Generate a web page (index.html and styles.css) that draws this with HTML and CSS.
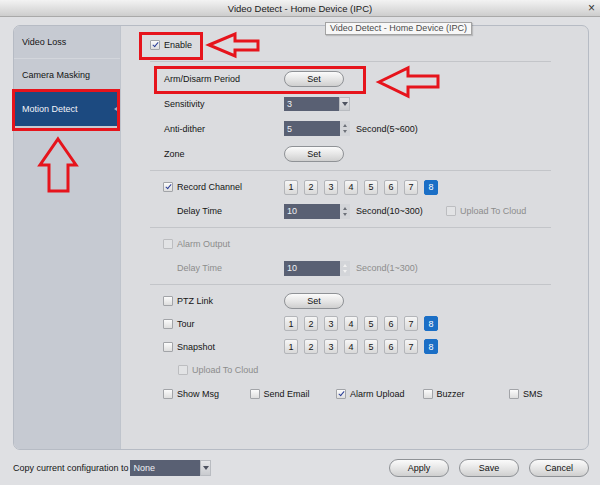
FILE: index.html
```html
<!DOCTYPE html>
<html lang="en">
<head>
    <meta charset="UTF-8">
    <meta name="viewport" content="width=device-width, initial-scale=1.0">
    <title>Video Detect - Home Device (IPC)</title>
    <link rel="stylesheet" href="styles.css">
</head>
<body>
    <div class="titlebar">
        <span class="title">Video Detect - Home Device (IPC)</span>
        <span class="close">×</span>
    </div>
    <div class="tooltip">Video Detect - Home Device (IPC)</div>

    <div class="panel">
        <ul class="sidebar">
            <li>Video Loss</li>
            <li>Camera Masking</li>
            <li class="active">Motion Detect</li>
        </ul>

        <div class="content">
            <div class="row enable"><span class="cb checked"></span>Enable</div>
            <div class="sep"></div>

            <div class="sec">
                <div class="row r25">
                    <span class="label">Arm/Disarm Period</span>
                    <span class="btn set">Set</span>
                </div>
                <div class="row r25">
                    <span class="label">Sensitivity</span>
                    <span class="select"><span class="val">3</span><span class="arrow"></span></span>
                </div>
                <div class="row r25">
                    <span class="label">Anti-dither</span>
                    <span class="spin"><span class="val">5</span><span class="updown"></span></span>
                    <span class="unit">Second(5~600)</span>
                </div>
                <div class="row r25">
                    <span class="label">Zone</span>
                    <span class="btn set">Set</span>
                </div>
            </div>
            <div class="sep"></div>

            <div class="sec">
                <div class="row r24">
                    <span class="label check"><span class="cb checked"></span>Record Channel</span>
                    <div class="channels">
                        <span>1</span><span>2</span><span>3</span><span>4</span>
                        <span>5</span><span>6</span><span>7</span><span class="on">8</span>
                    </div>
                </div>
                <div class="row r24">
                    <span class="label sub">Delay Time</span>
                    <span class="spin"><span class="val">10</span><span class="updown"></span></span>
                    <span class="unit wide">Second(10~300)</span>
                    <span class="item dim"><span class="cb disabled"></span>Upload To Cloud</span>
                </div>
            </div>
            <div class="sep"></div>

            <div class="sec dim">
                <div class="row r24">
                    <span class="label check"><span class="cb disabled"></span>Alarm Output</span>
                </div>
                <div class="row r24">
                    <span class="label sub">Delay Time</span>
                    <span class="spin"><span class="val">10</span><span class="updown faded"></span></span>
                    <span class="unit">Second(1~300)</span>
                </div>
            </div>
            <div class="sep"></div>

            <div class="sec">
                <div class="row r23">
                    <span class="label check"><span class="cb"></span>PTZ Link</span>
                    <span class="btn set">Set</span>
                </div>
                <div class="row r23">
                    <span class="label check"><span class="cb"></span>Tour</span>
                    <div class="channels">
                        <span>1</span><span>2</span><span>3</span><span>4</span>
                        <span>5</span><span>6</span><span>7</span><span class="on">8</span>
                    </div>
                </div>
                <div class="row r23">
                    <span class="label check"><span class="cb"></span>Snapshot</span>
                    <div class="channels">
                        <span>1</span><span>2</span><span>3</span><span>4</span>
                        <span>5</span><span>6</span><span>7</span><span class="on">8</span>
                    </div>
                </div>
                <div class="row r23 dim">
                    <span class="label cloud"><span class="cb disabled"></span>Upload To Cloud</span>
                </div>
                <div class="row r24 actions">
                    <span class="item"><span class="cb"></span>Show Msg</span>
                    <span class="item"><span class="cb"></span>Send Email</span>
                    <span class="item"><span class="cb checked"></span>Alarm Upload</span>
                    <span class="item"><span class="cb"></span>Buzzer</span>
                    <span class="item"><span class="cb"></span>SMS</span>
                </div>
            </div>
        </div>
    </div>

    <div class="footer">
        <span>Copy current configuration to</span>
        <span class="select copy"><span class="val">None</span><span class="arrow"></span></span>
        <div class="buttons">
            <span class="btn">Apply</span>
            <span class="btn">Save</span>
            <span class="btn">Cancel</span>
        </div>
    </div>

    <!-- red annotation marks over the dialog -->
    <svg class="marks" width="600" height="485" viewBox="0 0 600 485">
        <g fill="none" stroke="#e6141c" stroke-width="3">
            <rect x="140.5" y="33.5" width="61" height="25"/>
            <rect x="155.5" y="67.5" width="209" height="25"/>
            <rect x="13.5" y="90.5" width="105" height="39"/>
            <polygon points="209,45 235,34 235,41 258,41 258,50 235,50 235,56"/>
            <polygon points="379,82 408,68 408,76 438,76 438,87 408,87 408,96"/>
            <polygon points="58,139 76,165 68,165 68,191 49,191 49,165 40,165"/>
        </g>
    </svg>
</body>
</html>
```

FILE: styles.css
```css
:root {
    --bg-color: #dfe0e3;
    --panel-bg: #dbdcdf;
    --side-bg: #c6cad2;
    --active-bg: #1c4a80;
    --text-color: #141414;
    --dim-text: #8c8c8c;
    --field-bg: #596073;
    --line: #c3c5c9;
}

* {
    box-sizing: border-box;
}

body {
    margin: 0;
    width: 600px;
    height: 485px;
    background: var(--bg-color);
    font-family: 'Liberation Sans', Arial, sans-serif;
    font-size: 9px;
    color: var(--text-color);
    position: relative;
    overflow: hidden;
}

.titlebar {
    height: 17px;
    background: linear-gradient(#f3f3f3, #cdcdcd);
    border-bottom: 1px solid #a9a9a9;
    display: flex;
    align-items: center;
    justify-content: center;
    position: relative;
}

.title {
    font-size: 9.5px;
    color: #1a1a1a;
}

.close {
    position: absolute;
    right: 5px;
    top: 1px;
    font-size: 12px;
    color: #333;
}

.tooltip {
    position: absolute;
    left: 325px;
    top: 22px;
    height: 13px;
    line-height: 11px;
    padding: 0 4px;
    white-space: nowrap;
    background: #f7f7f7;
    border: 1px solid #a3a3a3;
    box-shadow: 1px 1px 1px rgba(0, 0, 0, 0.15);
    color: #4a4a4a;
    z-index: 2;
}

.panel {
    margin: 8px 11px 0 13px;
    height: 425px;
    display: flex;
    background: var(--panel-bg);
    border: 1px solid #b6bbc4;
    border-radius: 7px;
    overflow: hidden;
}

.sidebar {
    list-style: none;
    margin: 0;
    padding: 0;
    flex: none;
    width: 107px;
    background: var(--side-bg);
    border-right: 1px solid #bfc4cc;
}

.sidebar li {
    height: 33px;
    padding-left: 8px;
    display: flex;
    align-items: center;
    white-space: nowrap;
    border-bottom: 1px solid #d3d6dc;
    position: relative;
}

.sidebar li.active {
    height: 34px;
    background: var(--active-bg);
    color: #f2f4f8;
    border-bottom: none;
}

.sidebar li.active::after {
    content: "";
    position: absolute;
    right: 3px;
    top: 15px;
    border: 2px solid transparent;
    border-right: 3px solid #9fb1c8;
}

.content {
    flex: 1;
    min-width: 0;
    padding: 7px 37px 0 29px;
    white-space: nowrap;
}

.row {
    display: flex;
    align-items: center;
    height: 24px;
}

.r25 {
    height: 25px;
}

.r23 {
    height: 23px;
}

.sep {
    height: 1px;
    margin-top: 4px;
    background: var(--line);
}

.sec {
    padding-top: 4px;
}

.dim {
    color: var(--dim-text);
}

.label {
    flex: none;
    width: 134px;
    padding-left: 14px;
    display: flex;
    align-items: center;
}

.label.check {
    padding-left: 13px;
}

.label.sub {
    padding-left: 27px;
}

.label.cloud {
    padding-left: 28px;
}

.item {
    flex: none;
    display: flex;
    align-items: center;
}

/* checkboxes */
.cb {
    width: 10px;
    height: 10px;
    margin-right: 4px;
    border: 1px solid #a2a4a8;
    border-radius: 1px;
    background: linear-gradient(#fbfbfb, #dedede);
    position: relative;
    flex: none;
}

.cb.checked::after {
    content: "";
    position: absolute;
    left: 3px;
    top: 0;
    width: 2px;
    height: 5px;
    border-right: 1.5px solid #2b3f98;
    border-bottom: 1.5px solid #2b3f98;
    transform: rotate(40deg);
}

.cb.disabled {
    border-color: #bcbdc0;
    background: #e2e3e5;
}

/* buttons */
.btn {
    flex: none;
    width: 60px;
    height: 17px;
    display: flex;
    align-items: center;
    justify-content: center;
    border: 1px solid #8f9296;
    border-radius: 9px;
    background: linear-gradient(#fbfbfb, #e4e4e4 55%, #cfcfcf);
    color: #111;
}

.btn.set {
    height: 16px;
}

/* dark fields */
.select,
.spin {
    flex: none;
    display: flex;
    height: 15px;
    width: 66px;
}

.select {
    height: 14px;
}

.val {
    flex: 1;
    background: var(--field-bg);
    color: #eef0f4;
    padding-left: 3px;
    display: flex;
    align-items: center;
}

.arrow,
.updown {
    width: 11px;
    background: linear-gradient(#e6e7e9, #c9cbcf);
    border: 1px solid #b9bcc1;
    position: relative;
}

.arrow::after {
    content: "";
    position: absolute;
    left: 2px;
    top: 4px;
    border: 3px solid transparent;
    border-top: 4px solid #4e5360;
}

.updown {
    width: 10px;
    border: none;
    background: #d3d5d9;
}

.updown::before,
.updown::after {
    content: "";
    position: absolute;
    left: 3px;
    border: 2px solid transparent;
}

.updown::before {
    top: 1px;
    border-bottom: 3px solid #6d7179;
}

.updown::after {
    bottom: 1px;
    border-top: 3px solid #6d7179;
}

.updown.faded::before {
    border-bottom-color: #f0f0f0;
}

.updown.faded::after {
    border-top-color: #f0f0f0;
}

.unit {
    flex: none;
    margin-left: 6px;
}

.unit.wide {
    width: 90px;
}

/* channel numbers */
.channels {
    display: flex;
    gap: 6px;
}

.channels span {
    width: 14px;
    height: 15px;
    display: flex;
    align-items: center;
    justify-content: center;
    border: 1px solid #b3b5b9;
    border-radius: 2px;
    background: linear-gradient(#f6f6f6, #d9d9d9);
}

.channels span.on {
    background: #1b6fc6;
    border-color: #1b6fc6;
    color: #fff;
}

.actions {
    margin-top: 1px;
    padding-left: 13px;
}

.actions .item {
    width: 86.5px;
}

/* footer */
.footer {
    height: 36px;
    padding: 0 11px 0 13px;
    display: flex;
    align-items: center;
    white-space: nowrap;
}

.select.copy {
    width: 81px;
    height: 16px;
    margin-left: 1px;
}

.select.copy .val {
    padding-left: 4px;
}

.select.copy .arrow::after {
    top: 5px;
}

.buttons {
    margin-left: auto;
    display: flex;
    gap: 10px;
}

.buttons .btn {
    height: 18px;
}

.marks {
    position: absolute;
    left: 0;
    top: 0;
    pointer-events: none;
    z-index: 3;
}
```
